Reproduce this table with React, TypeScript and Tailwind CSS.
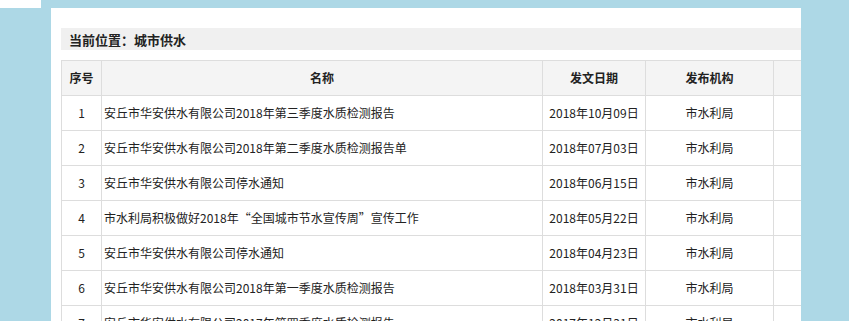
import React from "react";

const rows = [
  ["1", "安丘市华安供水有限公司2018年第三季度水质检测报告", "2018年10月09日", "市水利局"],
  ["2", "安丘市华安供水有限公司2018年第二季度水质检测报告单", "2018年07月03日", "市水利局"],
  ["3", "安丘市华安供水有限公司停水通知", "2018年06月15日", "市水利局"],
  ["4", "市水利局积极做好2018年“全国城市节水宣传周”宣传工作", "2018年05月22日", "市水利局"],
  ["5", "安丘市华安供水有限公司停水通知", "2018年04月23日", "市水利局"],
  ["6", "安丘市华安供水有限公司2018年第一季度水质检测报告", "2018年03月31日", "市水利局"],
  ["7", "安丘市华安供水有限公司2017年第四季度水质检测报告", "2017年12月31日", "市水利局"],
  ["8", "安丘市华安供水有限公司停水通知", "2017年12月01日", "市水利局"],
];

export default function App() {
  return (
    <div
      className="w-[849px] h-[321px] overflow-hidden bg-[#add8e6] text-[#222]"
      style={{ fontFamily: '"Noto Sans CJK SC", "Microsoft YaHei", sans-serif' }}
    >
      <div className="w-[41px] h-[8px] bg-white" />
      <div className="ml-[51px] w-[750px] h-[400px] bg-white overflow-hidden pt-[20px] pl-[10px]">
        <div className="h-[22px] bg-[#f0f0f0] pl-[8px] flex items-center text-[13px] font-bold leading-none">
          当前位置：城市供水
        </div>
        <table className="mt-[10px] border-collapse table-fixed w-[800px] text-[12px]">
          <colgroup>
            <col className="w-[40px]" />
            <col className="w-[441px]" />
            <col className="w-[103px]" />
            <col className="w-[128px]" />
            <col className="w-[88px]" />
          </colgroup>
          <thead>
            <tr className="h-[35px] bg-[#f4f4f4]">
              <th className="border border-[#dddddd] font-bold text-center p-0">序号</th>
              <th className="border border-[#dddddd] font-bold text-center p-0">名称</th>
              <th className="border border-[#dddddd] font-bold text-center p-0">发文日期</th>
              <th className="border border-[#dddddd] font-bold text-center p-0">发布机构</th>
              <th className="border border-[#dddddd] p-0"></th>
            </tr>
          </thead>
          <tbody>
            {rows.map((r) => (
              <tr key={r[0]} className="h-[35px]">
                <td className="border border-[#dddddd] text-center p-0">{r[0]}</td>
                <td className="border border-[#dddddd] text-left pl-[2px] p-0 whitespace-nowrap">{r[1]}</td>
                <td className="border border-[#dddddd] text-center p-0">{r[2]}</td>
                <td className="border border-[#dddddd] text-center p-0">{r[3]}</td>
                <td className="border border-[#dddddd] p-0"></td>
              </tr>
            ))}
          </tbody>
        </table>
      </div>
    </div>
  );
}
